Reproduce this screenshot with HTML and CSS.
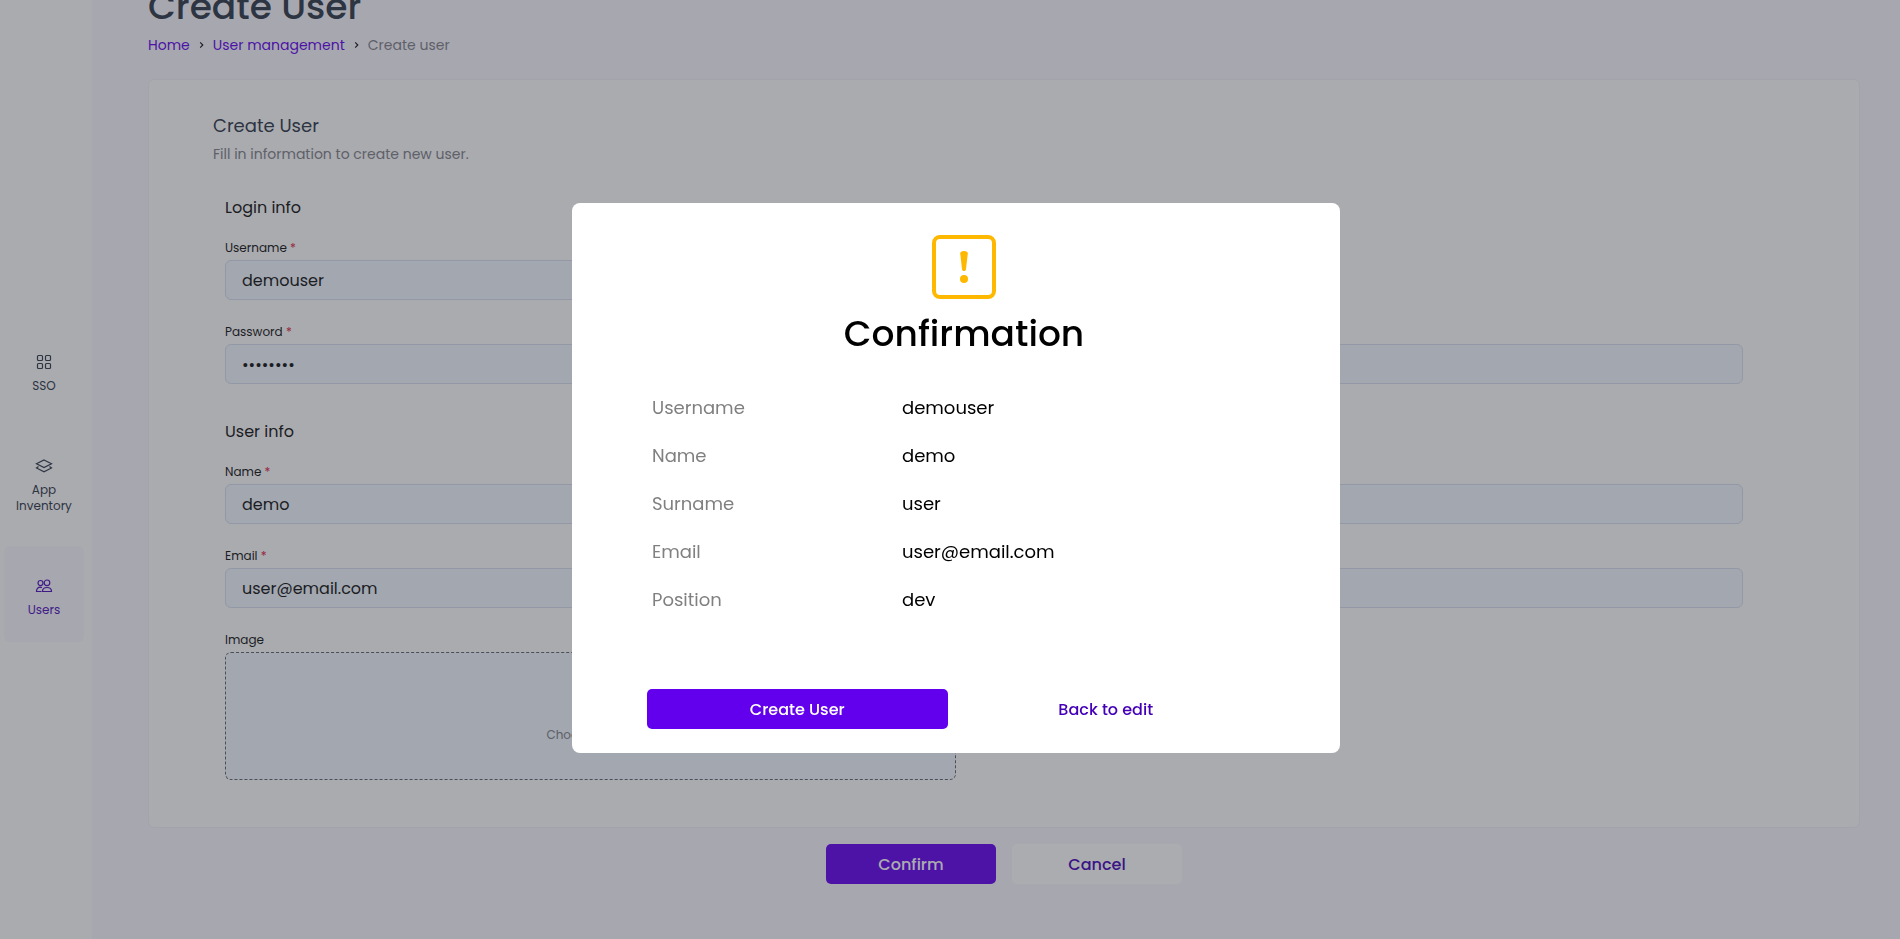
FILE: index.html
```html
<!DOCTYPE html>
<html lang="en">
<head>
<meta charset="utf-8">
<title>Create User</title>
<link rel="stylesheet" href="styles.css">
</head>
<body>
<div class="page">
  <nav class="sidebar" aria-label="Main">
    <a class="nav-item" href="#">
      <svg class="nav-icon" viewBox="0 0 24 24" aria-hidden="true"><rect x="5.5" y="5.5" width="5" height="5" rx="1"/><rect x="13.5" y="5.5" width="5" height="5" rx="1"/><rect x="5.5" y="13.5" width="5" height="5" rx="1"/><rect x="13.5" y="13.5" width="5" height="5" rx="1"/></svg>
      <span>SSO</span>
    </a>
    <a class="nav-item" href="#">
      <svg class="nav-icon" viewBox="0 0 24 24" aria-hidden="true"><path d="M12 6l7.500 3.800L12 13.600 4.500 9.800z"/><path d="M6.500 12.500l-2 1.500 7.500 3.900 7.500-3.900-2-1.500"/></svg>
      <span>App Inventory</span>
    </a>
    <a class="nav-item nav-item-active" href="#">
      <svg class="nav-icon" viewBox="0 0 24 24" aria-hidden="true"><circle cx="8.500" cy="9" r="2.500"/><circle cx="15" cy="8.800" r="2.800"/><path d="M9.500 17.500H4.500c0-2.500 1.200-4.300 4-4.300l1.500.3M10.500 17.500h9c0-2.500-1.800-4-4.500-4s-4.500 1.500-4.500 4z"/></svg>
      <span>Users</span>
    </a>
  </nav>

  <main class="main">
    <h1 class="page-title">Create User</h1>
    <nav class="breadcrumb" aria-label="Breadcrumb">
      <a href="#">Home</a>
      <svg class="chevron" viewBox="0 0 8 8" aria-hidden="true"><path d="M2.500 1l3 3-3 3"/></svg>
      <a href="#">User management</a>
      <svg class="chevron" viewBox="0 0 8 8" aria-hidden="true"><path d="M2.500 1l3 3-3 3"/></svg>
      <span>Create user</span>
    </nav>

    <form class="form">
      <div class="card">
        <h2 class="card-title">Create User</h2>
        <p class="card-note">Fill in information to create new user.</p>

        <section class="section">
          <h3 class="section-title">Login info</h3>
          <div class="fields">
            <div class="field field-first">
              <label for="username">Username <span class="required">*</span></label>
              <input id="username" type="text" value="demouser">
            </div>
            <div class="field">
              <label for="password">Password <span class="required">*</span></label>
              <input id="password" type="password" value="demouser">
            </div>
            <div class="field">
              <label for="confirm"></label>
              <input id="confirm" type="password" aria-label="Confirm password">
            </div>
          </div>
        </section>

        <section class="section">
          <h3 class="section-title">User info</h3>
          <div class="fields">
            <div class="field">
              <label for="name">Name <span class="required">*</span></label>
              <input id="name" type="text" value="demo">
            </div>
            <div class="field">
              <label for="surname"></label>
              <input id="surname" type="text" aria-label="Surname">
            </div>
            <div class="field">
              <label for="email">Email <span class="required">*</span></label>
              <input id="email" type="email" value="user@email.com">
            </div>
            <div class="field">
              <label for="position"></label>
              <input id="position" type="text" aria-label="Position">
            </div>
            <div class="field">
              <label for="image">Image</label>
              <label class="dropzone" for="image">Choose image</label>
              <input class="file" id="image" type="file">
            </div>
          </div>
        </section>
      </div>

      <div class="actions">
        <button class="button button-primary" type="submit">Confirm</button>
        <button class="button button-light" type="button">Cancel</button>
      </div>
    </form>
  </main>
</div>

<div class="overlay">
  <div class="modal" role="dialog" aria-modal="true" aria-labelledby="modal-title">
    <svg class="modal-icon" viewBox="0 0 64 64" aria-hidden="true"><rect x="2" y="2" width="60" height="60" rx="6" fill="none" stroke="currentColor" stroke-width="4"/><path d="M28.200 18.500C28.200 17 29.500 16 32 16s3.800 1 3.800 2.500L34 34c-.2 1.400-.8 2-2 2s-1.800-.6-2-2z" fill="currentColor"/><circle cx="32" cy="44" r="4" fill="currentColor"/></svg>
    <h2 class="modal-title" id="modal-title">Confirmation</h2>
    <dl class="summary">
      <dt>Username</dt><dd>demouser</dd>
      <dt>Name</dt><dd>demo</dd>
      <dt>Surname</dt><dd>user</dd>
      <dt>Email</dt><dd>user@email.com</dd>
      <dt>Position</dt><dd>dev</dd>
    </dl>
    <div class="modal-actions">
      <button class="button button-primary" type="button">Create User</button>
      <button class="button button-light" type="button">Back to edit</button>
    </div>
  </div>
</div>
</body>
</html>
```
FILE: styles.css
```css
* {
  box-sizing: border-box;
}

body {
  margin: 0;
  overflow: hidden;
  background: #f8f7ff;
  color: #111;
  font-family: Poppins, Inter, "Open Sans", sans-serif;
  font-size: 16px;
}

h1, h2, h3, p, dl, dd {
  margin: 0;
  font-weight: 400;
}

a {
  color: inherit;
  text-decoration: none;
}

input, button {
  font: inherit;
  color: inherit;
}

.page {
  display: flex;
  height: 100vh;
}

/* Sidebar */
.sidebar {
  display: flex;
  flex-direction: column;
  justify-content: center;
  gap: 8px;
  flex: 0 0 92px;
  padding: 25px 8px 0 4px;
  background: #fdfdfe;
}

.nav-item {
  display: flex;
  flex-direction: column;
  align-items: center;
  gap: 4px;
  padding: 28px 8px 24px;
  border-radius: 6px;
  color: #2d3748;
  font-size: 12px;
  line-height: 16px;
  text-align: center;
}

.nav-item-active {
  background: #f8f7ff;
  color: #4d0cba;
}

.nav-icon {
  width: 24px;
  height: 24px;
  fill: none;
  stroke: currentColor;
  stroke-width: 1.2;
}

/* Page content, scrolled a little below its top */
.main {
  flex: 1;
  margin-top: -20px;
  padding: 0 40px 0 56px;
}

.page-title {
  color: #2d3748;
  font-size: 36px;
  font-weight: 500;
  line-height: 54px;
}

.breadcrumb {
  display: flex;
  align-items: center;
  gap: 8px;
  padding: 0 0 23px;
  color: #808188;
  font-size: 14px;
  line-height: 22px;
}

.breadcrumb a {
  color: #6200ee;
}

.chevron {
  width: 7px;
  height: 8px;
  fill: none;
  stroke: #111;
  stroke-width: 1.3;
}

.card {
  padding: 32px 116px 47px 64px;
  border: 1px solid #f2f1fa;
  border-radius: 6px;
  background: #fdfdfe;
}

.card-title {
  color: #2d3748;
  font-size: 18px;
  line-height: 28px;
}

.card-note {
  padding-top: 2px;
  color: #808188;
  font-size: 14px;
  line-height: 24px;
}

.section {
  padding: 30px 0 0 12px;
}

.section + .section {
  padding-top: 36px;
}

.section-title {
  font-size: 16px;
  line-height: 24px;
}

.fields {
  display: grid;
  grid-template-columns: 1fr 1fr;
  gap: 24px 56px;
  padding-top: 20px;
}

.field {
  display: flex;
  flex-direction: column;
}

.field-first {
  grid-column: 1;
}

.field-first + .field {
  grid-column: 1;
}

.field label {
  height: 20px;
  font-size: 12px;
  line-height: 16px;
}

.required {
  color: #e02040;
}

.field input {
  width: 100%;
  height: 40px;
  padding: 0 16px;
  border: 1px solid #d6deee;
  border-radius: 6px;
  background: #f0f7ff;
}

.field .dropzone {
  display: flex;
  align-items: flex-end;
  justify-content: center;
  height: 128px;
  padding-bottom: 36px;
  border: 1px dashed #62646a;
  border-radius: 6px;
  background: #f0f7ff;
  color: #808188;
}

.field .file {
  display: none;
}

.actions {
  display: flex;
  justify-content: center;
  gap: 16px;
  padding-top: 16px;
}

.button {
  width: 170px;
  height: 40px;
  border: 0;
  border-radius: 5px;
  font-size: 16px;
  font-weight: 500;
}

.button-primary {
  background: #6200ee;
  color: #fff;
}

.button-light {
  background: #fff;
  color: #4400b8;
}

/* Confirmation dialog */
.overlay {
  position: fixed;
  inset: 0;
  display: flex;
  align-items: center;
  justify-content: center;
  padding: 17px 0 0 12px;
  background: rgba(45, 47, 57, 0.4);
}

.modal {
  display: flex;
  flex-direction: column;
  align-items: center;
  width: 768px;
  padding: 32px 0 24px 16px;
  border-radius: 8px;
  background: #fff;
  color: #000;
}

.modal-icon {
  width: 64px;
  height: 64px;
  color: #ffb800;
}

.modal-title {
  padding-bottom: 26px;
  font-size: 36px;
  font-weight: 500;
  line-height: 69px;
}

.summary {
  display: grid;
  grid-template-columns: 250px 1fr;
  gap: 20px 0;
  align-self: stretch;
  padding: 0 64px;
  font-size: 18px;
  line-height: 28px;
}

.summary dt {
  color: #808080;
}

.modal-actions {
  display: grid;
  grid-template-columns: 1fr 1fr;
  gap: 8px;
  align-self: stretch;
  padding: 75px 84px 0 59px;
}

.modal-actions .button {
  width: 100%;
}
```
